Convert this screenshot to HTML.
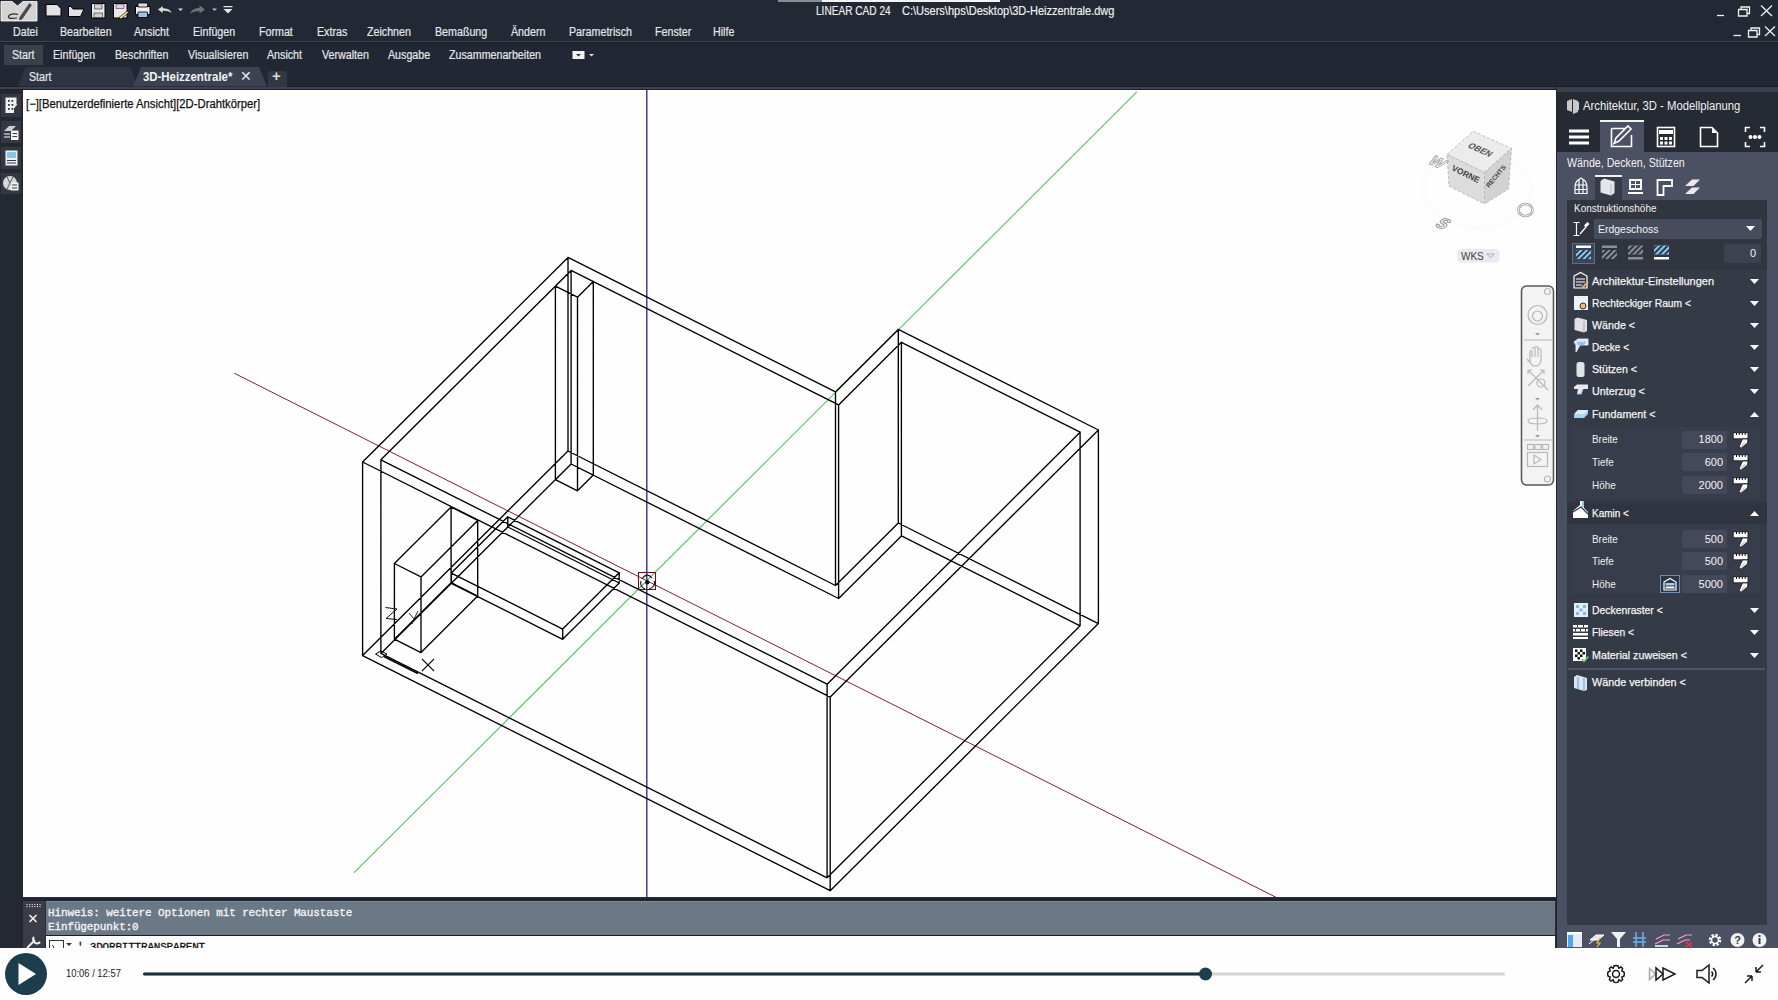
<!DOCTYPE html>
<html><head><meta charset="utf-8">
<style>
*{box-sizing:border-box}
html,body{margin:0;padding:0}
body{width:1778px;height:1000px;overflow:hidden;position:relative;background:#222934;font-family:"Liberation Sans",sans-serif;color:#e6e8ec}
.a{position:absolute}
.t{position:absolute;white-space:nowrap;font-size:12px;line-height:14px;transform-origin:0 50%}
.mn{color:#e4e6ea;transform:scaleX(.89);-webkit-text-stroke:.2px #e4e6ea}
</style></head><body>
<!-- title bar -->
<div class="a" style="left:0;top:0;width:1778px;height:41px;background:#222934"></div>
<div class="a" style="left:0;top:40.5px;width:1778px;height:1.5px;background:#3d4450"></div><div class="a" style="left:0;top:42px;width:1778px;height:1px;background:#1b2029"></div>
<div class="a" style="left:0;top:43px;width:1778px;height:47px;background:#222833"></div>
<div class="a" style="left:0;top:85.5px;width:1778px;height:1px;background:#1a1e27"></div><div class="a" style="left:0;top:86.5px;width:1778px;height:2px;background:#3d4350"></div><div class="a" style="left:0;top:88.5px;width:1778px;height:1.5px;background:#1b1f29"></div>
<div class="t" style="left:816px;top:4px;color:#f2f2f2;transform:scaleX(.842);-webkit-text-stroke:.15px #f2f2f2">LINEAR CAD 24</div>
<div class="t" style="left:902px;top:4px;color:#f2f2f2;transform:scaleX(.918);-webkit-text-stroke:.15px #f2f2f2">C:\Users\hps\Desktop\3D-Heizzentrale.dwg</div>
<svg class="a" style="left:0;top:0" width="240" height="22" viewBox="0 0 240 22">
<path d="M1 1.5H12L17.5 6L23 1.5H37V21H1Z" fill="#d4d4d4" stroke="#fff" stroke-width=".8"/>
<path d="M29.5 3.5L31.5 5L22 19L19.5 19.8L20 17Z" fill="#4a4a4a" stroke="#333" stroke-width=".6"/>
<path d="M18 14.5C14 13 9 14.5 8.5 16.5C8 18.5 12 18.8 17 18" fill="none" stroke="#2a2a2a" stroke-width="1.2"/>
<path d="M46 4.5H57L61 8.5V16H46Z" fill="#e2e2e2" stroke="#000" stroke-width="1"/>
<path d="M68.5 7V16.5H80.5L84 9H73L71 6.5H68.5Z" fill="#e2e2e2" stroke="#000" stroke-width="1"/>
<path d="M91.5 3.5H105V18H91.5Z" fill="#e8e8e8" stroke="#000" stroke-width="1"/>
<path d="M94.5 4H102V9H94.5ZM94 13H102.5V17.5H94Z" fill="#cfcfcf" stroke="#222" stroke-width=".6"/>
<path d="M113.5 3.5H127V18H113.5Z" fill="#e8e8e8" stroke="#000" stroke-width="1"/>
<path d="M116 4H124V8.5H116Z" fill="#e9c8e6" stroke="#222" stroke-width=".5"/>
<path d="M119 17.5L127 11L128.5 12.5L121 19Z" fill="#f2e08a" stroke="#000" stroke-width=".6"/>
<path d="M135.5 6.5H150V14.5H135.5Z" fill="#eee" stroke="#000" stroke-width="1"/>
<path d="M138 3H147.5V7H138Z" fill="#ddd" stroke="#000" stroke-width=".8"/>
<path d="M138 12H147.5V17.5H138Z" fill="#9cc3ea" stroke="#000" stroke-width=".8"/>
<path d="M157.5 9.5L163 5.5V8C168 8 171.5 10 172 14C170 11.8 167 11 163 11V13.5Z" fill="#dcdcdc" stroke="#111" stroke-width=".6"/>
<path d="M178 8.5H183L180.5 11Z" fill="#ddd"/>
<path d="M205 9.5L199.5 5.5V8C194.5 8 191 10 190.5 14C192.5 11.8 195.5 11 199.5 11V13.5Z" fill="#6e7178"/>
<path d="M212 8.5H217L214.5 11Z" fill="#bbb"/>
<path d="M223.5 6H232.5V7.2H223.5ZM223.5 9H232.5L228 13.5Z" fill="#e4e4e4"/>
</svg>
<div class="a" style="left:778px;top:0;width:44px;height:1.5px;background:#8a8c90"></div><div class="a" style="left:822px;top:0;width:178px;height:1.5px;background:#f4f4f4"></div>
<svg class="a" style="left:1700px;top:0" width="78" height="42" viewBox="0 0 78 42" fill="none" stroke="#f0f0f0" stroke-width="1.3">
<path d="M17 15.5H24"/>
<path d="M38.5 9.5H47V16H38.5ZM41 9.5V7H49.5V13.5H47"/>
<path d="M61 5.5L72 16M72 5.5L61 16"/>
<path d="M33.5 35.5H41"/>
<path d="M48.5 30.5H57V37H48.5ZM51 30.5V28H59.5V34.5H57"/>
<path d="M65 26.5L75 36M75 26.5L65 36"/>
</svg>
<!-- menu -->
<div class="t mn" style="left:13px;top:25px">Datei</div>
<div class="t mn" style="left:60px;top:25px">Bearbeiten</div>
<div class="t mn" style="left:134px;top:25px">Ansicht</div>
<div class="t mn" style="left:193px;top:25px">Einfügen</div>
<div class="t mn" style="left:259px;top:25px">Format</div>
<div class="t mn" style="left:317px;top:25px">Extras</div>
<div class="t mn" style="left:367px;top:25px">Zeichnen</div>
<div class="t mn" style="left:435px;top:25px">Bemaßung</div>
<div class="t mn" style="left:511px;top:25px">Ändern</div>
<div class="t mn" style="left:569px;top:25px">Parametrisch</div>
<div class="t mn" style="left:655px;top:25px">Fenster</div>
<div class="t mn" style="left:713px;top:25px">Hilfe</div>
<!-- ribbon tabs -->
<div class="a" style="left:4px;top:45px;width:39px;height:20px;background:#3a404c"></div>
<div class="t mn" style="left:12px;top:48px">Start</div>
<div class="t mn" style="left:53px;top:48px">Einfügen</div>
<div class="t mn" style="left:115px;top:48px">Beschriften</div>
<div class="t mn" style="left:188px;top:48px">Visualisieren</div>
<div class="t mn" style="left:267px;top:48px">Ansicht</div>
<div class="t mn" style="left:322px;top:48px">Verwalten</div>
<div class="t mn" style="left:388px;top:48px">Ausgabe</div>
<div class="t mn" style="left:449px;top:48px">Zusammenarbeiten</div>
<svg class="a" style="left:572px;top:50px" width="24" height="10"><rect x="0.5" y="1" width="12" height="8" fill="#f2f2f2"/><path d="M4 4H9L6.5 6.5Z" fill="#333"/><path d="M17 4H22L19.5 6.5Z" fill="#ddd"/></svg>
<!-- doc tabs -->
<div class="a" style="left:18px;top:67px;width:120px;height:19.5px;background:#2e3441;clip-path:polygon(8px 0,112px 0,120px 100%,0 100%);border-radius:5px 5px 0 0"></div>
<div class="a" style="left:133px;top:67px;width:134px;height:19.5px;background:#3b4252;clip-path:polygon(8px 0,126px 0,134px 100%,0 100%);border-radius:5px 5px 0 0"></div>
<div class="a" style="left:268px;top:71px;width:19px;height:15.5px;background:#313743;border-radius:3px 3px 0 0"></div>
<div class="t mn" style="left:29px;top:70px">Start</div>
<div class="t" style="left:143px;top:70px;font-weight:bold;color:#f4f4f4;transform:scaleX(.95)">3D-Heizzentrale*</div>
<div class="t" style="left:239.5px;top:69px;font-size:14px;color:#e8e8e8">✕</div>
<div class="t" style="left:272px;top:69px;font-size:15px;color:#ddd;font-weight:bold">+</div>
<!-- left toolbar -->
<div class="a" style="left:0;top:90px;width:23px;height:858px;background:#232831"></div>
<div class="a" style="left:1px;top:94px;width:20px;height:23px;background:#333844"></div>
<div class="a" style="left:1px;top:121px;width:20px;height:22px;background:#333844"></div>
<div class="a" style="left:1px;top:147px;width:20px;height:22px;background:#333844"></div>
<div class="a" style="left:1px;top:173px;width:20px;height:21px;background:#333844"></div>
<svg class="a" style="left:0;top:90px" width="23" height="110" viewBox="0 90 23 110">
<path d="M5.5 97.5H16.5V104L14 108V113H5.5Z" fill="#f0f0f0"/>
<g fill="#333844"><rect x="8" y="100" width="1.8" height="1.8"/><rect x="11.5" y="100" width="1.8" height="1.8"/><rect x="8" y="104" width="1.8" height="1.8"/><rect x="11.5" y="104" width="1.8" height="1.8"/><rect x="8" y="108" width="1.8" height="1.8"/><rect x="11.5" y="108" width="1.8" height="1.8"/></g>
<path d="M14 108L17 104" stroke="#f0f0f0" stroke-width="1"/>
<path d="M4 131L9 126H16L11 131Z" fill="#d0d0d0"/>
<path d="M4 134H10M4 137H10" stroke="#fff" stroke-width="1.2"/>
<rect x="11" y="130.5" width="7.5" height="9.5" fill="#f2f2f2"/><path d="M12.5 133.5H17M12.5 136.5H17" stroke="#333844" stroke-width="1"/>
<rect x="5.5" y="150.5" width="12" height="15" fill="#f0f0f0"/><rect x="7" y="152" width="9" height="6" fill="#8cc4e8"/>
<path d="M7 160.5H16M7 163H16" stroke="#333844" stroke-width="1"/>
<circle cx="10" cy="183" r="7" fill="#d8d8d8"/><path d="M7 177L13 189M13 177L7 189" stroke="#333844" stroke-width=".8"/>
<rect x="10.5" y="182.5" width="8" height="8" fill="#f2f2f2"/><path d="M12 185H17M12 188H17" stroke="#333844" stroke-width="1"/>
</svg>
<!-- canvas -->
<div class="a" style="left:23px;top:90px;width:1533px;height:808px;background:#fefefe;overflow:hidden">
<svg width="1533" height="807" viewBox="0 0 1533 807" style="position:absolute;left:0;top:0">
<g fill="none" stroke-linecap="round">
<path d="M211.6 283.4L1253.5 807.5" stroke="#8a1c3c" stroke-width="1"/>
<path d="M331.3 782.4L1113.6 2.2" stroke="#5cc45c" stroke-width="1.1"/>
<path d="M623.8 0V807" stroke="#22228a" stroke-width="1.3"/>
<path d="M339.6 565.6L807.2 800.7M807.2 800.7L1075.4 533.6M1075.4 533.6L875.3 433M875.3 433L812.5 495.5M812.5 495.5L545 361M545 361L339.6 565.6M339.6 372L807.2 607.1M807.2 607.1L1075.4 340M1075.4 340L875.3 239.4M875.3 239.4L812.5 301.9M812.5 301.9L545 167.4M545 167.4L339.6 372M339.6 565.6L339.6 372M807.2 800.7L807.2 607.1M1075.4 533.6L1075.4 340M875.3 433L875.3 239.4M812.5 495.5L812.5 301.9M545 361L545 167.4M357.9 563.4L804.1 787.8M804.1 787.8L1057.1 535.8M1057.1 535.8L878.4 445.9M878.4 445.9L815.6 508.5M815.6 508.5L548.1 374M548.1 374L357.9 563.4M357.9 369.8L804.1 594.2M804.1 594.2L1057.1 342.2M1057.1 342.2L878.4 252.3M878.4 252.3L815.6 314.9M815.6 314.9L548.1 180.4M548.1 180.4L357.9 369.8M357.9 563.4L357.9 369.8M804.1 787.8L804.1 594.2M1057.1 535.8L1057.1 342.2M878.4 445.9L878.4 252.3M815.6 508.5L815.6 314.9M548.1 374L548.1 180.4M532.4 389.7L554.5 400.8M554.5 400.8L570.3 385.1M570.3 385.1L548.1 374M548.1 374L532.4 389.7M532.4 196.1L554.5 207.2M554.5 207.2L570.3 191.5M570.3 191.5L548.1 180.4M548.1 180.4L532.4 196.1M532.4 389.7L532.4 196.1M554.5 400.8L554.5 207.2M570.3 385.1L570.3 191.5M548.1 374L548.1 180.4M371.4 549.2L398 562.6M398 562.6L454.7 506.1M454.7 506.1L428.1 492.7M428.1 492.7L371.4 549.2M371.4 473.5L398 486.9M398 486.9L454.7 430.4M454.7 430.4L428.1 417M428.1 417L371.4 473.5M371.4 549.2L371.4 473.5M398 562.6L398 486.9M454.7 506.1L454.7 430.4M428.1 492.7L428.1 417M428.3 493.3L539.7 549.3M539.7 549.3L596.2 493M596.2 493L484.8 437M484.8 437L428.3 493.3M428.3 483.1L539.7 539.1M539.7 539.1L596.2 482.8M596.2 482.8L484.8 426.8M484.8 426.8L428.3 483.1M428.3 493.3L428.3 483.1M539.7 549.3L539.7 539.1M596.2 493L596.2 482.8M484.8 437L484.8 426.8" stroke="#000" stroke-width="1.35"/>
</g>
</svg>
<svg class="a" style="left:0;top:0" width="1533" height="807" viewBox="23 90 1533 807">
<!-- viewcube compass -->
<ellipse cx="1478" cy="190" rx="54" ry="38" fill="none" stroke="#fcfcfc" stroke-width="6"/>
<path d="M1473.2 131.2L1511.5 148.5L1484.5 172.5L1447 154.5Z" fill="#ececec" stroke="#b0b0b0" stroke-width=".8" stroke-dasharray="3 2"/>
<path d="M1447 154.5L1484.5 172.5V204L1449 186Z" fill="#dcdcdc" stroke="#b0b0b0" stroke-width=".8" stroke-dasharray="3 2"/>
<path d="M1484.5 172.5L1511.5 148.5L1508.5 189L1484.5 204Z" fill="#d2d2d2" stroke="#b0b0b0" stroke-width=".8" stroke-dasharray="3 2"/>
<text transform="translate(1467 147) rotate(24) skewX(-20)" font-family="Liberation Sans" font-size="8.5" font-weight="bold" fill="#555">OBEN</text>
<text transform="translate(1451 170) rotate(26)" font-family="Liberation Sans" font-size="8.5" font-weight="bold" fill="#444">VORNE</text>
<text transform="translate(1489 188) rotate(-50)" font-family="Liberation Sans" font-size="6.5" font-weight="bold" fill="#444">RECHTS</text>
<text transform="translate(1427 163) rotate(24) skewX(-25)" font-family="Liberation Sans" font-size="15" font-weight="bold" fill="#fff" stroke="#999" stroke-width=".8">W</text>
<text transform="translate(1434 226) rotate(20) skewX(-25)" font-family="Liberation Sans" font-size="16" font-weight="bold" fill="#fff" stroke="#888" stroke-width=".8">S</text>
<ellipse cx="1525.5" cy="210" rx="7" ry="6" fill="none" stroke="#999" stroke-width="2.6"/>
<ellipse cx="1525.5" cy="210" rx="7" ry="6" fill="none" stroke="#fff" stroke-width="1"/>
<rect x="1457.5" y="249" width="42" height="13.5" rx="4" fill="#e9e9f1"/>
<text x="1461" y="259.5" font-family="Liberation Sans" font-size="10" fill="#444">WKS</text>
<path d="M1487 254H1494L1490.5 258Z" fill="none" stroke="#9aa" stroke-width=".8"/>
<!-- nav bar -->
<rect x="1521.5" y="286" width="32" height="199" rx="5" fill="#f3f3f3" stroke="#5a5a5a" stroke-width="1.6"/>
<g fill="none" stroke="#b8b8b8" stroke-width="1.2">
<circle cx="1547.5" cy="291.5" r="3"/>
<circle cx="1537.5" cy="315" r="9.5"/><circle cx="1537.5" cy="316" r="5"/>
<path d="M1524 340H1552M1524 440H1552"/>
<path d="M1530 362V352C1530 350 1532 350 1532 352V357M1532 349C1532 347 1535 347 1535 349V357M1535 348C1535 346 1538 346 1538 348V357M1538 350C1538 348 1541 348 1541 350V360C1541 364 1538 366 1535 366H1533L1527 359"/>
<path d="M1528 370L1544 386M1544 370L1528 386M1528 370H1532M1528 370V374M1544 370H1540M1544 370V374"/>
<circle cx="1541" cy="383" r="4"/><path d="M1544 386L1548 390"/>
<path d="M1537.5 405V431M1533 410L1537.5 405L1542 410M1528 421C1528 417 1547 417 1547 421C1547 425 1528 425 1528 421"/>
<rect x="1527.5" y="444.5" width="6" height="5"/><rect x="1535" y="444.5" width="6" height="5"/><rect x="1542.5" y="444.5" width="6" height="5"/>
<rect x="1527.5" y="452.5" width="20" height="14"/><path d="M1534 455V464L1541 459.5Z"/>
<circle cx="1547.5" cy="479" r="3"/>
</g>
<g fill="#999"><path d="M1535 333H1540L1537.5 335.5Z"/><path d="M1535 398H1540L1537.5 400.5Z"/><path d="M1535 435H1540L1537.5 437.5Z"/></g>
<!-- UCS -->
<path d="M375.5 654L381 651L387 654L381.5 657.5Z" fill="none" stroke="#000" stroke-width="1"/>
<path d="M384 656.5L418 673.5" stroke="#000" stroke-width="1.9"/>
<path d="M385.5 607.5L397 609M397 609L386 618.5M386 618.5L397 619.5" fill="none" stroke="#111" stroke-width="1"/>
<path d="M409 613L414 619L418 611M414 619L412 624" fill="none" stroke="#111" stroke-width=".9"/>
<path d="M422 659L434 671M434 659L422 671" fill="none" stroke="#111" stroke-width="1.1"/>
<!-- cursor -->
<rect x="638.5" y="572.5" width="17" height="17" fill="none" stroke="#5a1424" stroke-width="1.1"/>
<path d="M642 579C645 574 649 574 652 578M654 581C656 584 653 588 649 589M645 589C641 587 640 584 641 581" fill="none" stroke="#111" stroke-width="1.1"/>
<circle cx="647.3" cy="582.2" r="2.2" fill="#111"/>
</svg>

<div class="t" style="left:3px;top:7px;color:#111;font-size:12px;transform:scaleX(.94);-webkit-text-stroke:.25px #111">[−][Benutzerdefinierte Ansicht][2D-Drahtkörper]</div>
</div>
<!-- right panel -->
<div class="a" style="left:1556px;top:87px;width:222px;height:861px;background:#4b5063"></div>
<div class="a" style="left:1556px;top:87px;width:222px;height:5px;background:#3a404c"></div>
<div class="a" style="left:1556px;top:92px;width:222px;height:60px;background:#252a33"></div>
<div class="a" style="left:1556px;top:87px;width:1px;height:861px;background:#1f232b"></div>
<div class="a" style="left:1600px;top:120px;width:44px;height:32px;background:#4b5063"></div>
<div class="a" style="left:1600px;top:120px;width:44px;height:2px;background:#f2f2f2"></div>
<div class="a" style="left:1595px;top:176px;width:27px;height:24px;background:#353b48"></div>
<div class="a" style="left:1595px;top:174.5px;width:27px;height:2px;background:#f0f0f0"></div>
<div class="a" style="left:1567px;top:200px;width:200px;height:725px;background:#343a46"></div>
<div class="a" style="left:1567px;top:200px;width:200px;height:70px;background:#30353f"></div>
<svg class="a" style="left:1556px;top:87px" width="222" height="120" viewBox="1556 87 222 120">
<path d="M1567 101L1572 99V112L1567 110ZM1573 99L1578 101V112L1573 114ZM1576 102H1579V110H1576Z" fill="#c8c8c8"/>
<g fill="#fff"><rect x="1569" y="129.5" width="20" height="3"/><rect x="1569" y="135.5" width="20" height="3"/><rect x="1569" y="141.5" width="20" height="3"/></g>
<g fill="none" stroke="#fff" stroke-width="1.6">
<path d="M1611.5 128.5H1630M1611.5 128.5V146.5H1631.5V135"/>
<path d="M1614 143.5L1616 138L1628 126L1631 129L1619 141Z" fill="#4b5063"/>
<rect x="1657.5" y="127.5" width="17" height="19"/>
<path d="M1700.5 127.5H1712L1717.5 133V146.5H1700.5Z"/>
<path d="M1745.5 132V127.5H1750M1760 127.5H1764.5V132M1764.5 142V146.5H1760M1750 146.5H1745.5V142"/>
</g>
<g fill="#fff"><rect x="1659" y="130" width="14" height="4"/><rect x="1660" y="137" width="3" height="3"/><rect x="1664.5" y="137" width="3" height="3"/><rect x="1669" y="137" width="3" height="3"/><rect x="1660" y="141.5" width="3" height="3"/><rect x="1664.5" y="141.5" width="3" height="3"/><rect x="1669" y="141.5" width="3" height="3"/>
<path d="M1712 127.5L1717.5 133H1712Z"/>
<circle cx="1750.5" cy="137" r="2"/><circle cx="1755" cy="137" r="2"/><circle cx="1759.5" cy="137" r="2"/></g>
<g fill="none" stroke="#fff" stroke-width="1.2">
<path d="M1575 187.5C1575 181 1578 180 1581 178C1584 180 1587 181 1587 187.5V193.5H1575Z"/>
<path d="M1575 185H1587M1575 189.5H1587M1579 179.5V193.5M1583 179.5V193.5"/>
</g>
<path d="M1600.5 181L1604 178.5L1614.5 181.5L1614.5 193L1611 195.5L1600.5 192.5Z" fill="#e6e6ea"/>
<path d="M1611 184V195.5" stroke="#b8b8c0" stroke-width="1"/>
<g fill="#fff"><rect x="1629" y="179" width="13" height="11"/><rect x="1628" y="192" width="15" height="2"/></g>
<g fill="#4b5063"><rect x="1631" y="181" width="4" height="3"/><rect x="1636" y="181" width="4" height="3"/><rect x="1631" y="185" width="4" height="3"/><rect x="1636" y="185" width="4" height="3"/></g>
<path d="M1657.5 195V180H1672V186H1663.5V195Z" fill="none" stroke="#fff" stroke-width="1.8"/>
<path d="M1685 186L1692 179.5H1700L1693.5 186ZM1685 194L1692 187.5H1700L1693.5 194Z" fill="#e8e8ee"/>
</svg>
<svg class="a" style="left:1572px;top:219px" width="20" height="20" viewBox="1572 219 20 20"><g fill="none" stroke="#fff" stroke-width="1.2"><path d="M1573.5 222.5H1579.5M1576.5 222.5V235.5M1573.5 235.5H1579.5"/><path d="M1580 234L1586 227"/></g><path d="M1584 225.5L1587.5 222L1589.5 224L1586 227.5Z" fill="#fff"/></svg>
<div class="t" style="left:1583px;top:99px;color:#f0f0f0;transform:scaleX(.94)">Architektur, 3D - Modellplanung</div>
<div class="t" style="left:1567px;top:156px;color:#f2f2f4;transform:scaleX(.887)">Wände, Decken, Stützen</div>
<div class="t" style="left:1573.5px;top:201px;font-size:11px;color:#f4f4f4;transform:scaleX(.905)">Konstruktionshöhe</div>
<div class="a" style="left:1594px;top:219px;width:168px;height:20px;background:#464c5c;border-radius:2px"></div>
<div class="t" style="left:1597.5px;top:222px;font-size:11px;color:#f4f4f4;transform:scaleX(.95)">Erdgeschoss</div>
<svg class="a" style="left:1745px;top:225px" width="12" height="8"><path d="M1 1H10L5.5 6Z" fill="#fff"/></svg>
<div class="a" style="left:1572px;top:243px;width:23px;height:21px;background:#3a4556;border:1px solid #56708e"></div>
<div class="a" style="left:1724px;top:244px;width:37px;height:19px;background:#3c4250;border-radius:2px"></div>
<div class="t" style="left:1750px;top:246px;font-size:11px;color:#f4f4f4">0</div>
<svg class="a" style="left:1570px;top:240px" width="110" height="28" viewBox="1570 240 110 28">
<defs><pattern id="hb" width="4" height="4" patternUnits="userSpaceOnUse" patternTransform="rotate(45)"><rect width="2" height="4" fill="#2a3a4a"/></pattern>
<pattern id="hg" width="4" height="4" patternUnits="userSpaceOnUse" patternTransform="rotate(45)"><rect width="2" height="4" fill="#30343e"/></pattern></defs>
<rect x="1576" y="245.5" width="15" height="2.5" fill="#fff"/>
<rect x="1576" y="250" width="15" height="9" fill="#8cc8f0"/><rect x="1576" y="250" width="15" height="9" fill="url(#hb)"/>
<rect x="1602" y="245.5" width="15" height="2.5" fill="#8a8e98"/>
<rect x="1602" y="250" width="15" height="9" fill="#8a8e98"/><rect x="1602" y="250" width="15" height="9" fill="url(#hg)"/>
<rect x="1628" y="245.5" width="15" height="9" fill="#8a8e98"/><rect x="1628" y="245.5" width="15" height="9" fill="url(#hg)"/>
<rect x="1628" y="257" width="15" height="2.5" fill="#8a8e98"/>
<rect x="1654" y="245.5" width="15" height="9" fill="#8cc8f0"/><rect x="1654" y="245.5" width="15" height="9" fill="url(#hb)"/>
<rect x="1654" y="257" width="15" height="2.5" fill="#fff"/>
</svg>
<div class="a" style="left:1572px;top:427px;width:188px;height:72px;background:#373d4a"></div>
<div class="a" style="left:1567px;top:502px;width:200px;height:22px;background:#2f3440"></div>
<div class="a" style="left:1572px;top:525px;width:188px;height:68px;background:#373d4a"></div>
<div class="a" style="left:1568px;top:668px;width:197px;height:1.5px;background:#4e5467"></div>
<div class="t" style="left:1592px;top:273.5px;font-size:11px;color:#f4f4f4;-webkit-text-stroke:.25px #f4f4f4;transform:scaleX(0.998)">Architektur-Einstellungen</div>
<svg class="a" style="left:1749px;top:277.5px" width="12" height="8"><path d="M1 1H10L5.5 6Z" fill="#fff"/></svg>
<div class="t" style="left:1592px;top:295.5px;font-size:11px;color:#f4f4f4;-webkit-text-stroke:.25px #f4f4f4;transform:scaleX(0.933)">Rechteckiger Raum <</div>
<svg class="a" style="left:1749px;top:299.5px" width="12" height="8"><path d="M1 1H10L5.5 6Z" fill="#fff"/></svg>
<div class="t" style="left:1592px;top:317.5px;font-size:11px;color:#f4f4f4;-webkit-text-stroke:.25px #f4f4f4;transform:scaleX(0.972)">Wände <</div>
<svg class="a" style="left:1749px;top:321.5px" width="12" height="8"><path d="M1 1H10L5.5 6Z" fill="#fff"/></svg>
<div class="t" style="left:1592px;top:339.5px;font-size:11px;color:#f4f4f4;-webkit-text-stroke:.25px #f4f4f4;transform:scaleX(0.912)">Decke <</div>
<svg class="a" style="left:1749px;top:343.5px" width="12" height="8"><path d="M1 1H10L5.5 6Z" fill="#fff"/></svg>
<div class="t" style="left:1592px;top:362.0px;font-size:11px;color:#f4f4f4;-webkit-text-stroke:.25px #f4f4f4;transform:scaleX(0.962)">Stützen <</div>
<svg class="a" style="left:1749px;top:366.0px" width="12" height="8"><path d="M1 1H10L5.5 6Z" fill="#fff"/></svg>
<div class="t" style="left:1592px;top:384.3px;font-size:11px;color:#f4f4f4;-webkit-text-stroke:.25px #f4f4f4;transform:scaleX(0.977)">Unterzug <</div>
<svg class="a" style="left:1749px;top:388.3px" width="12" height="8"><path d="M1 1H10L5.5 6Z" fill="#fff"/></svg>
<div class="t" style="left:1592px;top:406.5px;font-size:11px;color:#f4f4f4;-webkit-text-stroke:.25px #f4f4f4;transform:scaleX(0.974)">Fundament <</div>
<svg class="a" style="left:1749px;top:410.5px" width="12" height="8"><path d="M1 6H10L5.5 1Z" fill="#fff"/></svg>
<div class="t" style="left:1592px;top:505.8px;font-size:11px;color:#f4f4f4;-webkit-text-stroke:.25px #f4f4f4;transform:scaleX(0.907)">Kamin <</div>
<svg class="a" style="left:1749px;top:509.8px" width="12" height="8"><path d="M1 6H10L5.5 1Z" fill="#fff"/></svg>
<div class="t" style="left:1592px;top:602.5px;font-size:11px;color:#f4f4f4;-webkit-text-stroke:.25px #f4f4f4;transform:scaleX(0.944)">Deckenraster <</div>
<svg class="a" style="left:1749px;top:606.5px" width="12" height="8"><path d="M1 1H10L5.5 6Z" fill="#fff"/></svg>
<div class="t" style="left:1592px;top:624.5px;font-size:11px;color:#f4f4f4;-webkit-text-stroke:.25px #f4f4f4;transform:scaleX(0.934)">Fliesen <</div>
<svg class="a" style="left:1749px;top:628.5px" width="12" height="8"><path d="M1 1H10L5.5 6Z" fill="#fff"/></svg>
<div class="t" style="left:1592px;top:647.5px;font-size:11px;color:#f4f4f4;-webkit-text-stroke:.25px #f4f4f4;transform:scaleX(0.974)">Material zuweisen <</div>
<svg class="a" style="left:1749px;top:651.5px" width="12" height="8"><path d="M1 1H10L5.5 6Z" fill="#fff"/></svg>
<div class="t" style="left:1592px;top:675.0px;font-size:11px;color:#f4f4f4;-webkit-text-stroke:.25px #f4f4f4;transform:scaleX(0.98)">Wände verbinden <</div>
<div class="t" style="left:1592px;top:432.3px;font-size:11px;color:#f0f0f0;transform:scaleX(.9)">Breite</div>
<div class="a" style="left:1682px;top:430.8px;width:45px;height:18px;background:#434959;border-radius:2px"></div>
<div class="t" style="left:1682px;top:432.3px;width:41px;text-align:right;font-size:11px;color:#f4f4f4;transform:none">1800</div>
<svg class="a" style="left:1732px;top:431.8px" width="18" height="16" viewBox="0 0 18 16"><rect x="1.2" y=".8" width="14.8" height="6" fill="#fff" stroke="#111" stroke-width=".8"/><path d="M4.5 .8V3M7.4 .8V3M10.3 .8V3M13.2 .8V3" stroke="#111" stroke-width="1"/><path d="M10.5 7H16L15.5 11L9 16.2L7 14.8Z" fill="#fff" stroke="#111" stroke-width=".8"/><path d="M8.6 14.6L13 10.6" stroke="#888" stroke-width=".7"/></svg>
<div class="t" style="left:1592px;top:454.5px;font-size:11px;color:#f0f0f0;transform:scaleX(.9)">Tiefe</div>
<div class="a" style="left:1682px;top:453.0px;width:45px;height:18px;background:#434959;border-radius:2px"></div>
<div class="t" style="left:1682px;top:454.5px;width:41px;text-align:right;font-size:11px;color:#f4f4f4;transform:none">600</div>
<svg class="a" style="left:1732px;top:454.0px" width="18" height="16" viewBox="0 0 18 16"><rect x="1.2" y=".8" width="14.8" height="6" fill="#fff" stroke="#111" stroke-width=".8"/><path d="M4.5 .8V3M7.4 .8V3M10.3 .8V3M13.2 .8V3" stroke="#111" stroke-width="1"/><path d="M10.5 7H16L15.5 11L9 16.2L7 14.8Z" fill="#fff" stroke="#111" stroke-width=".8"/><path d="M8.6 14.6L13 10.6" stroke="#888" stroke-width=".7"/></svg>
<div class="t" style="left:1592px;top:477.5px;font-size:11px;color:#f0f0f0;transform:scaleX(.9)">Höhe</div>
<div class="a" style="left:1682px;top:476.0px;width:45px;height:18px;background:#434959;border-radius:2px"></div>
<div class="t" style="left:1682px;top:477.5px;width:41px;text-align:right;font-size:11px;color:#f4f4f4;transform:none">2000</div>
<svg class="a" style="left:1732px;top:477.0px" width="18" height="16" viewBox="0 0 18 16"><rect x="1.2" y=".8" width="14.8" height="6" fill="#fff" stroke="#111" stroke-width=".8"/><path d="M4.5 .8V3M7.4 .8V3M10.3 .8V3M13.2 .8V3" stroke="#111" stroke-width="1"/><path d="M10.5 7H16L15.5 11L9 16.2L7 14.8Z" fill="#fff" stroke="#111" stroke-width=".8"/><path d="M8.6 14.6L13 10.6" stroke="#888" stroke-width=".7"/></svg>
<div class="t" style="left:1592px;top:531.5px;font-size:11px;color:#f0f0f0;transform:scaleX(.9)">Breite</div>
<div class="a" style="left:1682px;top:530.0px;width:45px;height:18px;background:#434959;border-radius:2px"></div>
<div class="t" style="left:1682px;top:531.5px;width:41px;text-align:right;font-size:11px;color:#f4f4f4;transform:none">500</div>
<svg class="a" style="left:1732px;top:531.0px" width="18" height="16" viewBox="0 0 18 16"><rect x="1.2" y=".8" width="14.8" height="6" fill="#fff" stroke="#111" stroke-width=".8"/><path d="M4.5 .8V3M7.4 .8V3M10.3 .8V3M13.2 .8V3" stroke="#111" stroke-width="1"/><path d="M10.5 7H16L15.5 11L9 16.2L7 14.8Z" fill="#fff" stroke="#111" stroke-width=".8"/><path d="M8.6 14.6L13 10.6" stroke="#888" stroke-width=".7"/></svg>
<div class="t" style="left:1592px;top:553.5px;font-size:11px;color:#f0f0f0;transform:scaleX(.9)">Tiefe</div>
<div class="a" style="left:1682px;top:552.0px;width:45px;height:18px;background:#434959;border-radius:2px"></div>
<div class="t" style="left:1682px;top:553.5px;width:41px;text-align:right;font-size:11px;color:#f4f4f4;transform:none">500</div>
<svg class="a" style="left:1732px;top:553.0px" width="18" height="16" viewBox="0 0 18 16"><rect x="1.2" y=".8" width="14.8" height="6" fill="#fff" stroke="#111" stroke-width=".8"/><path d="M4.5 .8V3M7.4 .8V3M10.3 .8V3M13.2 .8V3" stroke="#111" stroke-width="1"/><path d="M10.5 7H16L15.5 11L9 16.2L7 14.8Z" fill="#fff" stroke="#111" stroke-width=".8"/><path d="M8.6 14.6L13 10.6" stroke="#888" stroke-width=".7"/></svg>
<div class="t" style="left:1592px;top:576.5px;font-size:11px;color:#f0f0f0;transform:scaleX(.9)">Höhe</div>
<div class="a" style="left:1682px;top:575.0px;width:45px;height:18px;background:#434959;border-radius:2px"></div>
<div class="t" style="left:1682px;top:576.5px;width:41px;text-align:right;font-size:11px;color:#f4f4f4;transform:none">5000</div>
<svg class="a" style="left:1732px;top:576.0px" width="18" height="16" viewBox="0 0 18 16"><rect x="1.2" y=".8" width="14.8" height="6" fill="#fff" stroke="#111" stroke-width=".8"/><path d="M4.5 .8V3M7.4 .8V3M10.3 .8V3M13.2 .8V3" stroke="#111" stroke-width="1"/><path d="M10.5 7H16L15.5 11L9 16.2L7 14.8Z" fill="#fff" stroke="#111" stroke-width=".8"/><path d="M8.6 14.6L13 10.6" stroke="#888" stroke-width=".7"/></svg>
<div class="a" style="left:1660px;top:575px;width:20px;height:18px;border:1px solid #6b8fb8;background:#2c3644"></div>
<svg class="a" style="left:1663px;top:577px" width="14" height="14" viewBox="0 0 14 14"><path d="M1 5L7 1.5L13 5V13H1Z" fill="none" stroke="#fff" stroke-width="1.2"/><rect x="2.5" y="6" width="9" height="2.5" fill="#9fd0f0"/><rect x="2.5" y="9.5" width="9" height="2" fill="#fff"/></svg>
<svg class="a" style="left:1567px;top:265px" width="30" height="435" viewBox="1567 265 30 435">
<path d="M1574 276L1580.5 272.5L1587 276V288H1574Z" fill="#343a46" stroke="#fff" stroke-width="1.2"/>
<path d="M1576 279H1585M1576 282H1585M1576 285H1582" stroke="#fff" stroke-width="1"/>
<path d="M1582 288L1588 282" stroke="#e8b070" stroke-width="2"/>
<rect x="1574" y="296" width="14" height="14" fill="#eef2f6"/><circle cx="1583" cy="306" r="3" fill="#e8c070" stroke="#333" stroke-width="1"/>
<path d="M1574.5 319L1577.5 317.5L1587 320V331L1584 332.5L1574.5 330Z" fill="#e0e0e6"/><path d="M1584 321V332.5" stroke="#aaa"/>
<path d="M1574 342L1578 339H1588V345H1580L1576 352V345Z" fill="#cfe4f4" stroke="#fff" stroke-width=".8"/>
<path d="M1577 342H1586L1584 345H1578Z" fill="#8fc4ec"/>
<rect x="1576.5" y="362" width="8" height="15" rx="2.5" fill="#e2e2e6"/>
<path d="M1574 387L1577 384.5H1588V389H1583L1581 394H1577L1578 389H1574Z" fill="#e8e8ee"/><path d="M1577 394H1581L1583 389" fill="none" stroke="#8fc4ec" stroke-width="1.2"/>
<path d="M1574 415L1578 410H1588V414L1584 418H1574Z" fill="#a8d4f4"/><path d="M1578 410H1588L1584 414H1574Z" fill="#d8ecfa"/>
<path d="M1573 511L1580 505V501H1584V508L1588 512V518H1573Z" fill="#fff"/><path d="M1573 512L1581 507L1588 514" fill="none" stroke="#343a46" stroke-width="1.3"/><rect x="1582" y="501" width="2" height="6" fill="#8fc4ec"/>
<rect x="1574" y="603" width="14" height="14" fill="#dff0fb"/><rect x="1576" y="605" width="3" height="3" fill="#8ab8dc"/><rect x="1583" y="605" width="3" height="3" fill="#8ab8dc"/><rect x="1579.5" y="608.5" width="3" height="3" fill="#8ab8dc"/><rect x="1576" y="612" width="3" height="3" fill="#8ab8dc"/><rect x="1583" y="612" width="3" height="3" fill="#8ab8dc"/>
<g fill="#fff"><rect x="1573" y="625" width="15" height="2.5"/><rect x="1573" y="629" width="15" height="2.5"/><rect x="1573" y="633" width="15" height="2.5"/><rect x="1573" y="637" width="15" height="2"/></g>
<g fill="#343a46"><rect x="1577" y="625" width="1" height="2.5"/><rect x="1583" y="625" width="1" height="2.5"/><rect x="1575" y="629" width="1" height="2.5"/><rect x="1580" y="629" width="1" height="2.5"/><rect x="1585" y="629" width="1" height="2.5"/></g>
<rect x="1573" y="648" width="13" height="13" fill="#fff"/>
<g fill="#111"><rect x="1575" y="649.5" width="2.5" height="2.5"/><rect x="1580" y="649.5" width="2.5" height="2.5"/><rect x="1577.5" y="652" width="2.5" height="2.5"/><rect x="1582.5" y="652" width="2.5" height="2.5"/><rect x="1575" y="654.5" width="2.5" height="2.5"/><rect x="1580" y="654.5" width="2.5" height="2.5"/><rect x="1577.5" y="657" width="2.5" height="2.5"/></g>
<path d="M1582 659L1584 661.5L1588.5 656.5" fill="none" stroke="#5ac870" stroke-width="1.6"/>
<path d="M1574 677L1577 675L1587 678V690L1584 691L1574 688Z" fill="#d8e6f4"/><path d="M1578 677V689M1584 678V691" stroke="#8ab8e0" stroke-width="1.5"/>
</svg>
<svg class="a" style="left:1560px;top:926px" width="218" height="22" viewBox="1560 926 218 22">
<rect x="1567" y="932" width="15" height="15" fill="#e8ecf2"/><rect x="1568" y="935" width="5" height="12" fill="#4aa8f0"/><rect x="1567" y="932" width="15" height="2" fill="#fff"/>
<path d="M1590 940L1596 935H1604L1598 940ZM1589 944L1595 939" stroke="#fff" fill="#e8e8e8"/><path d="M1600 938L1597 943H1600L1597 947" stroke="#f0c030" fill="none" stroke-width="1.2"/>
<path d="M1611 932H1626L1620 939V947H1617V939Z" fill="#f0f0f0"/>
<path d="M1636 932V947M1643 932V947M1633 938H1646M1633 942H1646" stroke="#6ab4f0" stroke-width="1.5"/>
<path d="M1656 939L1664 935H1670M1655 944L1663 940H1670" stroke="#ff9ad0" stroke-width="1.2" fill="none"/><path d="M1655 946H1668" stroke="#fff" stroke-width="1.5"/>
<path d="M1678 939L1686 935H1692M1677 944L1685 940H1690" stroke="#ff9ad0" stroke-width="1.2" fill="none"/><path d="M1686 942L1692 947M1692 942L1686 947" stroke="#ff3040" stroke-width="1.5"/>
<circle cx="1715" cy="940" r="5" fill="none" stroke="#fff" stroke-width="2.5" stroke-dasharray="2.2 1.7"/><circle cx="1715" cy="940" r="3.5" fill="none" stroke="#fff" stroke-width="1.5"/>
<circle cx="1737.5" cy="940" r="7" fill="#f2f2f2"/><text x="1737.5" y="944" text-anchor="middle" font-size="11" font-weight="bold" fill="#343a46" font-family="Liberation Sans">?</text>
<circle cx="1759.5" cy="940" r="7" fill="#f2f2f2"/><rect x="1758.5" y="938" width="2" height="6" fill="#343a46"/><rect x="1758.5" y="935" width="2" height="2" fill="#343a46"/>
</svg>
<!-- command line -->
<div class="a" style="left:23px;top:897px;width:1533px;height:51px;background:#2a2e38"></div>
<div class="a" style="left:23px;top:898px;width:1533px;height:3px;background:#1f2230"></div>
<div class="a" style="left:23px;top:901px;width:22px;height:47px;background:#3a3d48"></div>
<div class="a" style="left:46px;top:901px;width:1509px;height:34px;background:#6b7987;border-top:1px solid #7d8a97"></div><div class="a" style="left:46px;top:935px;width:1509px;height:1px;background:#1a1e28"></div>
<div class="a" style="left:46px;top:936px;width:1509px;height:12px;background:#fdfdfd;overflow:hidden">
<svg class="a" style="left:3px;top:4px" width="30" height="10"><rect x=".5" y=".5" width="14" height="10" fill="none" stroke="#333" stroke-width="1"/><path d="M3 5L5 7L3 9" stroke="#333" fill="none"/><path d="M17 3H23L20 6Z" fill="#333"/></svg>
<div class="t" style="left:31px;top:4px;font-family:'Liberation Mono',monospace;font-size:11px;color:#111;letter-spacing:-.2px;-webkit-text-stroke:.3px #111">'&nbsp;3DORBITTRANSPARENT</div>
</div>
<svg class="a" style="left:23px;top:901px" width="22" height="47" viewBox="0 0 22 47">
<g fill="#e8e8e8"><rect x="3.5" y="3" width="1.1" height="1.1"/><rect x="3.5" y="5" width="1.1" height="1.1"/><rect x="6.1" y="3" width="1.1" height="1.1"/><rect x="6.1" y="5" width="1.1" height="1.1"/><rect x="8.7" y="3" width="1.1" height="1.1"/><rect x="8.7" y="5" width="1.1" height="1.1"/><rect x="11.3" y="3" width="1.1" height="1.1"/><rect x="11.3" y="5" width="1.1" height="1.1"/><rect x="13.9" y="3" width="1.1" height="1.1"/><rect x="13.9" y="5" width="1.1" height="1.1"/><rect x="16.5" y="3" width="1.1" height="1.1"/><rect x="16.5" y="5" width="1.1" height="1.1"/></g>
<path d="M6.5 14L13.5 21M13.5 14L6.5 21" stroke="#f2f2f2" stroke-width="1.6"/>
<path d="M4 47L12 39M11 36A3.5 3.5 0 1 0 17 41" stroke="#f2f2f2" stroke-width="2" fill="none"/>
</svg>
<div class="t" style="left:48px;top:906px;font-family:'Liberation Mono',monospace;font-size:11px;color:#f6f6f6;letter-spacing:-.13px;-webkit-text-stroke:.3px #f6f6f6">Hinweis: weitere Optionen mit rechter Maustaste</div>
<div class="t" style="left:48px;top:920px;font-family:'Liberation Mono',monospace;font-size:11px;color:#f6f6f6;letter-spacing:-.13px;-webkit-text-stroke:.3px #f6f6f6">Einfügepunkt:0</div>
<!-- video bar -->
<div class="a" style="left:0;top:948px;width:1778px;height:52px;background:#fefefe"></div>
<svg class="a" style="left:0;top:948px" width="1778" height="52" viewBox="0 948 1778 52">
<circle cx="26" cy="974" r="21" fill="#1c3d4c"/>
<path d="M18.5 963L36 974L18.5 985Z" fill="#fff"/>
<rect x="143" y="972.5" width="1362" height="3" rx="1.5" fill="#d3d3d3"/>
<rect x="143" y="972.5" width="1063" height="3" rx="1.5" fill="#15303e"/>
<circle cx="1205.5" cy="974" r="6.5" fill="#1c3f4e"/>
<g fill="none" stroke="#1a1a1a" stroke-width="1.5">
<circle cx="1616" cy="974" r="3.5"/>
<path d="M1616 965.5L1618 965.8L1618.8 968.2L1621 967L1622.6 968.4L1621.8 970.8L1624 972L1624.3 974L1624 976L1621.8 977.2L1622.6 979.6L1621 981L1618.8 979.8L1618 982.2L1616 982.5L1614 982.2L1613.2 979.8L1611 981L1609.4 979.6L1610.2 977.2L1608 976L1607.7 974L1608 972L1610.2 970.8L1609.4 968.4L1611 967L1613.2 968.2L1614 965.8Z"/>
<path d="M1649.5 968.5V979.5L1655.5 974Z" stroke="#aaa"/><path d="M1656 968V980L1663 974Z"/><path d="M1663 968V980L1675 974Z"/>
<path d="M1697 970.5H1702L1709 965V983L1702 977.5H1697Z"/><path d="M1713 968C1717 971 1717 977 1713 980"/><path d="M1711.5 971.5C1713 973 1713 975 1711.5 976.5"/>
<path d="M1745 983L1752 976M1752 976H1747M1752 976V981M1763 965L1756 972M1756 972H1761M1756 972V967"/>
</g>
</svg>
<div class="t" style="left:66px;top:967px;font-size:10px;color:#222;transform:scaleX(.94)">10:06 / 12:57</div>
</body></html>
